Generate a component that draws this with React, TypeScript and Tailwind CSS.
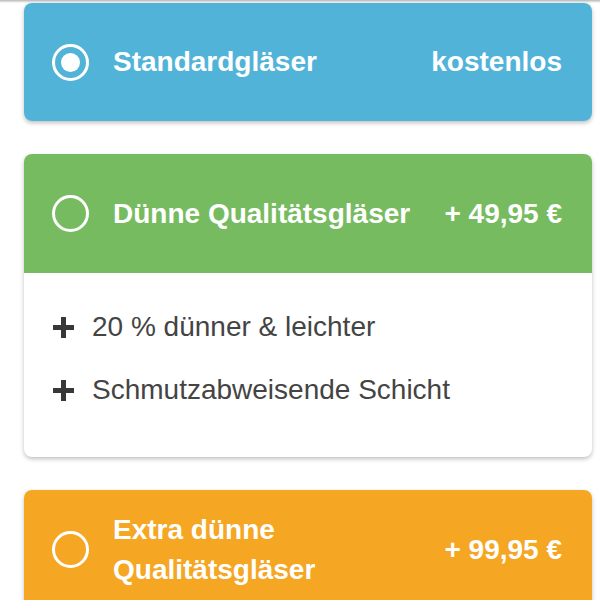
import React from "react";

function Radio({ checked }: { checked?: boolean }) {
  return (
    <div className="w-[37px] h-[37px] shrink-0 rounded-full border-[3px] border-white flex items-center justify-center">
      {checked && <div className="w-[19px] h-[19px] rounded-full bg-white" />}
    </div>
  );
}

function Plus() {
  return (
    <svg width="21" height="21" viewBox="0 0 21 21" className="shrink-0">
      <rect x="0" y="8" width="21" height="5" fill="#383838" />
      <rect x="8" y="0" width="5" height="21" fill="#383838" />
    </svg>
  );
}

function Header({
  color,
  title,
  price,
  checked,
  rounded,
  minH,
}: {
  color: string;
  title: React.ReactNode;
  price: string;
  checked?: boolean;
  rounded: string;
  minH: string;
}) {
  return (
    <div className={`${color} ${rounded} ${minH} flex items-center pl-[28px] pr-[30px] text-white font-bold text-[28px] leading-[40px]`}>
      <Radio checked={checked} />
      <div className="ml-[24px] flex-1">{title}</div>
      <div className="whitespace-nowrap">{price}</div>
    </div>
  );
}

export default function App() {
  return (
    <div className="w-[600px] h-[600px] overflow-hidden bg-white" style={{ fontFamily: '"Liberation Sans", Arial, sans-serif' }}>
      <div className="h-[3px] bg-gradient-to-b from-[#b8b8b8] to-white" />
      <div className="pl-[24px] pr-[8px] flex flex-col gap-[33px]">
        <div className="rounded-[8px] shadow-[0_2px_4px_rgba(0,0,0,0.25)]">
          <Header color="bg-[#52b3d9]" rounded="rounded-[8px]" minH="min-h-[118px]" title="Standardgläser" price="kostenlos" checked />
        </div>
        <div className="rounded-[8px] shadow-[0_2px_4px_rgba(0,0,0,0.25)] bg-white">
          <Header color="bg-[#77bb60]" rounded="rounded-t-[8px]" minH="min-h-[119px]" title="Dünne Qualitätsgläser" price="+ 49,95 €" />
          <div className="pl-[29px] pt-[34px] pb-[47px] flex flex-col gap-[23px] text-[28px] leading-[40px] text-[#444444]">
            <div className="flex items-center gap-[18px]">
              <Plus />
              <span>20 % dünner &amp; leichter</span>
            </div>
            <div className="flex items-center gap-[18px]">
              <Plus />
              <span>Schmutzabweisende Schicht</span>
            </div>
          </div>
        </div>
        <div className="rounded-[8px] shadow-[0_2px_4px_rgba(0,0,0,0.25)]">
          <Header
            color="bg-[#f5a623]"
            rounded="rounded-[8px]"
            minH="min-h-[119px]"
            title={
              <>
                Extra dünne
                <br />
                Qualitätsgläser
              </>
            }
            price="+ 99,95 €"
          />
        </div>
      </div>
    </div>
  );
}
